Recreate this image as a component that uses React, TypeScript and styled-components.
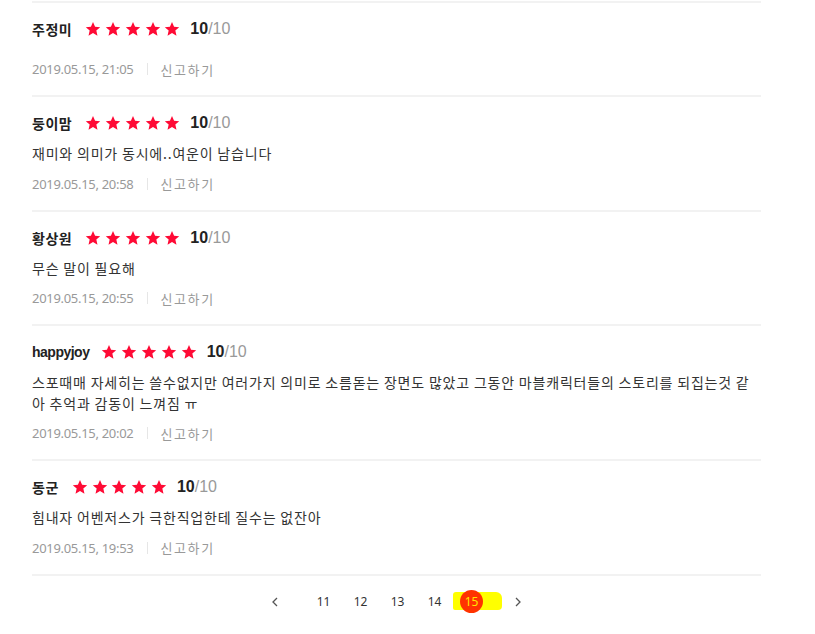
import React from "react";
import styled, { createGlobalStyle } from "styled-components";

const GlobalStyle = createGlobalStyle`
  html, body { margin: 0; padding: 0; background: #fff; }
  body { font-family: "Noto Sans CJK KR", "Noto Sans", sans-serif; color: #333; }
`;

const Page = styled.div`
  padding: 0 0 0 32px;
  width: 729px;
`;

const List = styled.ul`
  list-style: none;
  margin: 1px 0 0;
  padding: 0;
  border-top: 2px solid #f2f2f2;
`;

const Item = styled.li`
  display: flex;
  flex-direction: column;
  gap: 10px;
  padding: 16px 0;
  border-bottom: 2px solid #f2f2f2;
`;

const Head = styled.div`
  display: flex;
  align-items: center;
  height: 20px;
`;

const Name = styled.span<{ $latin?: boolean }>`
  font-family: "Liberation Sans", "Noto Sans CJK KR", sans-serif;
  font-size: 14px;
  font-weight: 700;
  color: #222;
  letter-spacing: ${(p) => (p.$latin ? "-0.5px" : "0.5px")};
  margin-right: ${(p) => (p.$latin ? "12px" : "13px")};
`;

const Stars = styled.span`
  display: flex;
  gap: 3.8px;
  margin-right: 10px;
`;

const Score = styled.span`
  font-family: "Liberation Sans", Arial, sans-serif;
  font-size: 16px;
  color: #999;
  strong { color: #222; font-weight: 700; }
`;

const Body = styled.p`
  margin: 0;
  font-size: 14px;
  line-height: 20.5px;
  letter-spacing: 0.8px;
  color: #333;
  &:empty { height: 0; }
`;

const Meta = styled.div`
  display: flex;
  align-items: center;
  height: 20px;
  font-size: 13px;
  color: #999;
`;

const Date = styled.span`
  font-family: "Noto Sans", sans-serif;
  letter-spacing: -0.3px;
`;

const Divider = styled.span`
  width: 1px;
  height: 12px;
  background: #e6e6e6;
  margin: 0 12px 0 14px;
`;

const Report = styled.button`
  border: 0;
  background: none;
  padding: 0;
  font: inherit;
  letter-spacing: 1.6px;
  color: #999;
  cursor: pointer;
`;

const Pager = styled.nav`
  display: flex;
  justify-content: center;
  align-items: center;
  height: 52px;
  font-family: "Noto Sans", sans-serif;
  font-size: 12px;
  color: #333;
`;

const Arrow = styled.button<{ $side: "l" | "r" }>`
  border: 0;
  background: none;
  padding: 0;
  width: 20px;
  height: 20px;
  display: flex;
  align-items: center;
  justify-content: center;
  margin: ${(p) => (p.$side === "l" ? "0 20px 0 0" : "0 0 0 18px")};
`;

const PageSlot = styled.span`
  position: relative;
  display: flex;
  margin: 0 7px;
`;

const PageNum = styled.button<{ $active?: boolean }>`
  position: relative;
  z-index: 1;
  border: 0;
  padding: 0;
  width: 23px;
  height: 23px;
  border-radius: 50%;
  font: inherit;
  font-size: 12px;
  display: flex;
  align-items: center;
  justify-content: center;
  color: ${(p) => (p.$active ? "#ffe600" : "#333")};
  background: ${(p) => (p.$active ? "#ff3300" : "transparent")};
`;

const Highlight = styled.span`
  position: absolute;
  left: -7px;
  top: 2px;
  width: 49px;
  height: 18px;
  background: #ffff00;
  border-radius: 3px 6px 4px 2px;
  z-index: 0;
`;

const Star = () => (
  <svg width="16" height="16" viewBox="0 0 24 24">
    <path
      d="M12 1.5l3.1 7.1 7.7.7-5.8 5.1 1.7 7.6L12 18l-6.7 4 1.7-7.6-5.8-5.1 7.7-.7z"
      fill="#ff0a35"
    />
  </svg>
);

const Chevron = ({ dir }: { dir: "l" | "r" }) => (
  <svg width="8" height="10" viewBox="0 0 8 10">
    <path
      d={dir === "l" ? "M6 1L2 5l4 4" : "M2 1l4 4-4 4"}
      stroke="#555"
      strokeWidth="1.3"
      fill="none"
    />
  </svg>
);

const reviews = [
  { name: "주정미", body: "", date: "2019.05.15, 21:05" },
  { name: "둥이맘", body: "재미와 의미가 동시에..여운이 남습니다", date: "2019.05.15, 20:58" },
  { name: "황상원", body: "무슨 말이 필요해", date: "2019.05.15, 20:55" },
  {
    name: "happyjoy",
    latin: true,
    body:
      "스포때매 자세히는 쓸수없지만 여러가지 의미로 소름돋는 장면도 많았고 그동안 마블캐릭터들의 스토리를 되집는것 같아 추억과 감동이 느껴짐 ㅠ",
    date: "2019.05.15, 20:02",
  },
  { name: "동군", body: "힘내자 어벤저스가 극한직업한테 질수는 없잔아", date: "2019.05.15, 19:53" },
];

export default function App() {
  return (
    <>
      <GlobalStyle />
      <Page>
        <List>
          {reviews.map((r) => (
            <Item key={r.date}>
              <Head>
                <Name $latin={r.latin}>{r.name}</Name>
                <Stars>
                  {[0, 1, 2, 3, 4].map((i) => (
                    <Star key={i} />
                  ))}
                </Stars>
                <Score>
                  <strong>10</strong>/10
                </Score>
              </Head>
              <Body>{r.body}</Body>
              <Meta>
                <Date>{r.date}</Date>
                <Divider />
                <Report>신고하기</Report>
              </Meta>
            </Item>
          ))}
        </List>
        <Pager>
          <Arrow $side="l">
            <Chevron dir="l" />
          </Arrow>
          {[11, 12, 13, 14].map((n) => (
            <PageSlot key={n}>
              <PageNum>{n}</PageNum>
            </PageSlot>
          ))}
          <PageSlot>
            <Highlight />
            <PageNum $active>15</PageNum>
          </PageSlot>
          <Arrow $side="r">
            <Chevron dir="r" />
          </Arrow>
        </Pager>
      </Page>
    </>
  );
}
